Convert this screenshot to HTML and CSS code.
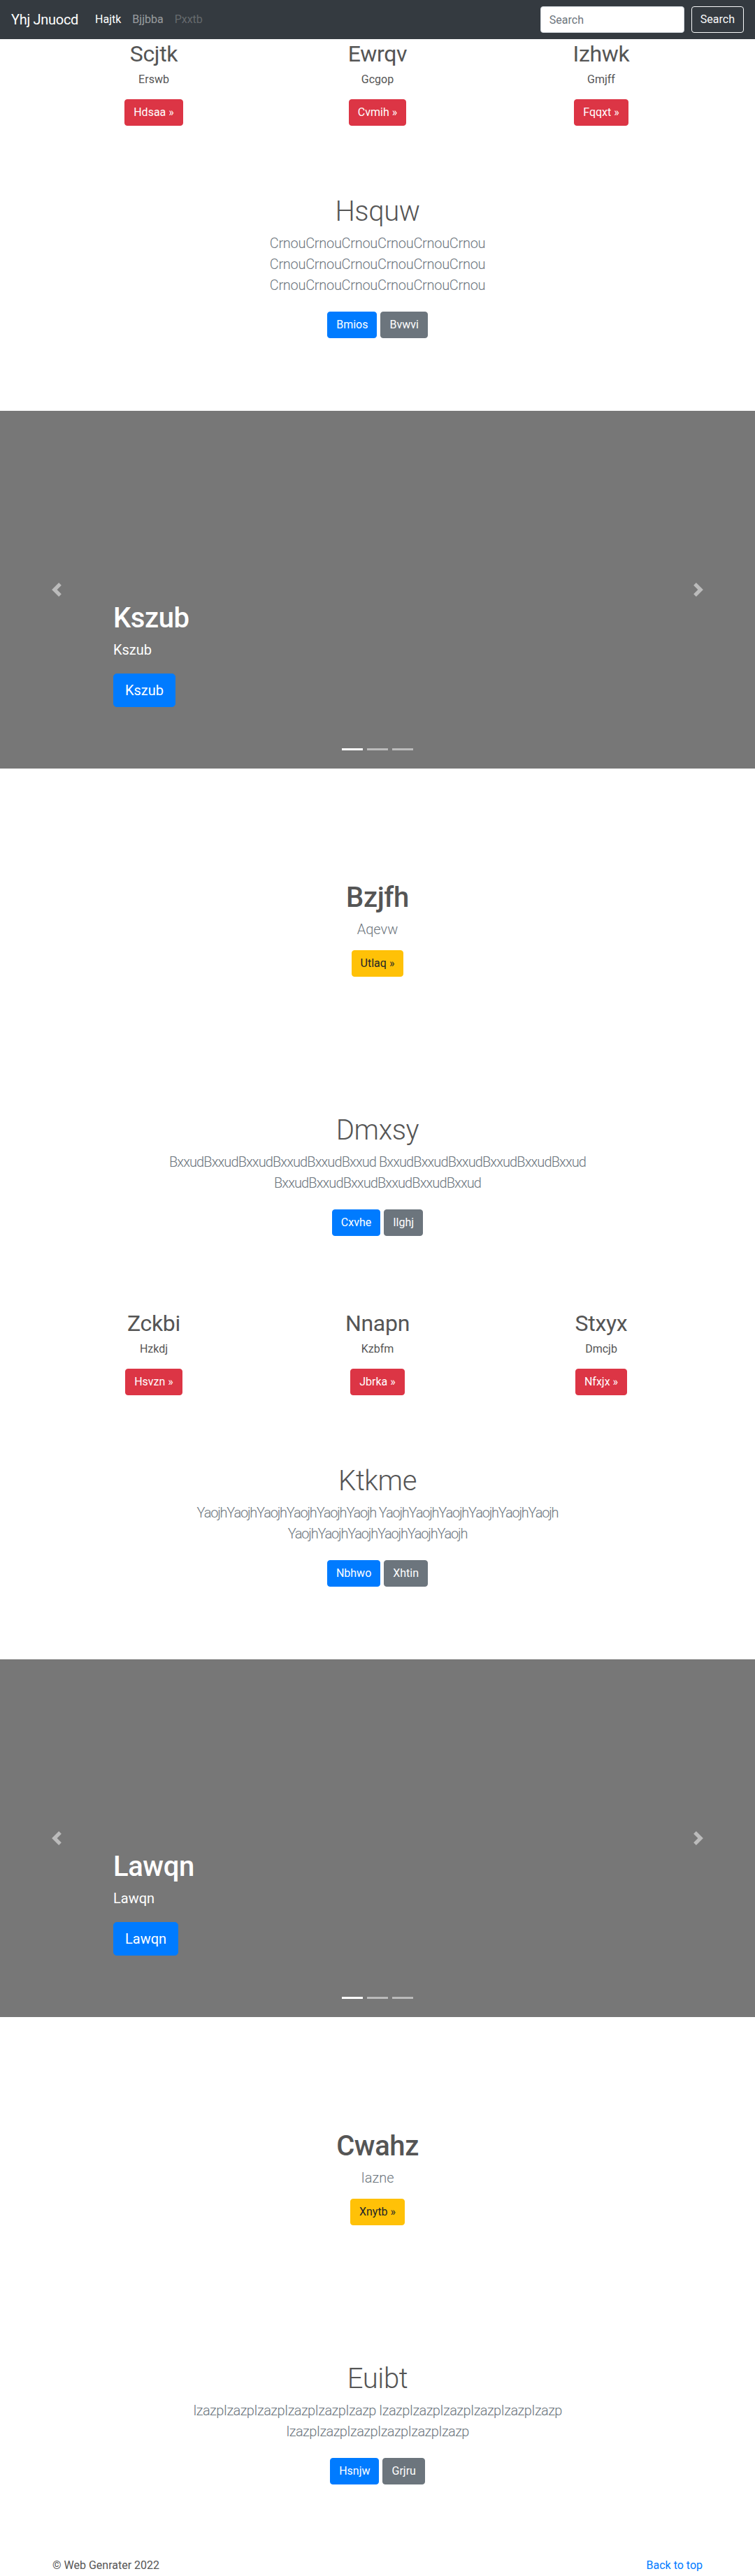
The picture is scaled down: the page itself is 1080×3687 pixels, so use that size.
FILE: index.html
```html
<!DOCTYPE html>
<html lang="en">
<head>
<meta charset="utf-8">
<title>Yhj Jnuocd</title>
<link rel="stylesheet" href="styles.css">
</head>
<body>
<header class="navbar">
  <a class="navbar-brand" href="#">Yhj Jnuocd</a>
  <nav>
    <ul class="nav-list">
      <li><a class="nav-link is-active" href="#">Hajtk</a></li>
      <li><a class="nav-link" href="#">Bjjbba</a></li>
      <li><a class="nav-link is-disabled" href="#">Pxxtb</a></li>
    </ul>
  </nav>
  <form class="search-form">
    <input class="search-input" type="text" placeholder="Search" aria-label="Search">
    <button class="btn btn-outline-light" type="button">Search</button>
  </form>
</header>

<main>
  <section class="feature-row">
    <div class="feature">
      <h2 class="feature-title">Scjtk</h2>
      <p class="feature-text">Erswb</p>
      <a class="btn btn-danger" href="#">Hdsaa &raquo;</a>
    </div>
    <div class="feature">
      <h2 class="feature-title">Ewrqv</h2>
      <p class="feature-text">Gcgop</p>
      <a class="btn btn-danger" href="#">Cvmih &raquo;</a>
    </div>
    <div class="feature">
      <h2 class="feature-title">Izhwk</h2>
      <p class="feature-text">Gmjff</p>
      <a class="btn btn-danger" href="#">Fqqxt &raquo;</a>
    </div>
  </section>

  <section class="jumbotron">
    <div class="jumbo-inner">
      <h1 class="jumbo-title">Hsquw</h1>
      <p class="lead lead-crnou">CrnouCrnouCrnouCrnouCrnouCrnou CrnouCrnouCrnouCrnouCrnouCrnou CrnouCrnouCrnouCrnouCrnouCrnou</p>
      <div class="actions">
        <a class="btn btn-primary" href="#">Bmios</a>
        <a class="btn btn-secondary" href="#">Bvwvi</a>
      </div>
    </div>
  </section>

  <section class="carousel">
    <div class="caption">
      <h1 class="caption-title">Kszub</h1>
      <p class="caption-text">Kszub</p>
      <a class="btn btn-primary btn-lg" href="#">Kszub</a>
    </div>
    <a class="control control-prev" href="#" aria-label="Previous">
      <svg class="control-icon" viewBox="0 0 8 8" width="20" height="20"><path d="M5.25 0l-4 4 4 4 1.5-1.5L4.25 4l2.5-2.5L5.25 0z"/></svg>
    </a>
    <a class="control control-next" href="#" aria-label="Next">
      <svg class="control-icon" viewBox="0 0 8 8" width="20" height="20"><path d="M2.75 0l-1.5 1.5L3.75 4l-2.5 2.5L2.75 8l4-4-4-4z"/></svg>
    </a>
    <ol class="indicators">
      <li class="is-active"></li>
      <li></li>
      <li></li>
    </ol>
  </section>

  <section class="hero">
    <h1 class="hero-title">Bzjfh</h1>
    <p class="lead">Aqevw</p>
    <a class="btn btn-warning" href="#">Utlaq &raquo;</a>
  </section>

  <section class="jumbotron">
    <div class="jumbo-inner">
      <h1 class="jumbo-title">Dmxsy</h1>
      <p class="lead lead-bxxud">BxxudBxxudBxxudBxxudBxxudBxxud BxxudBxxudBxxudBxxudBxxudBxxud BxxudBxxudBxxudBxxudBxxudBxxud</p>
      <div class="actions">
        <a class="btn btn-primary" href="#">Cxvhe</a>
        <a class="btn btn-secondary" href="#">Ilghj</a>
      </div>
    </div>
  </section>

  <section class="feature-row">
    <div class="feature">
      <h2 class="feature-title">Zckbi</h2>
      <p class="feature-text">Hzkdj</p>
      <a class="btn btn-danger" href="#">Hsvzn &raquo;</a>
    </div>
    <div class="feature">
      <h2 class="feature-title">Nnapn</h2>
      <p class="feature-text">Kzbfm</p>
      <a class="btn btn-danger" href="#">Jbrka &raquo;</a>
    </div>
    <div class="feature">
      <h2 class="feature-title">Stxyx</h2>
      <p class="feature-text">Dmcjb</p>
      <a class="btn btn-danger" href="#">Nfxjx &raquo;</a>
    </div>
  </section>

  <section class="jumbotron">
    <div class="jumbo-inner">
      <h1 class="jumbo-title">Ktkme</h1>
      <p class="lead lead-yaojh">YaojhYaojhYaojhYaojhYaojhYaojh YaojhYaojhYaojhYaojhYaojhYaojh YaojhYaojhYaojhYaojhYaojhYaojh</p>
      <div class="actions">
        <a class="btn btn-primary" href="#">Nbhwo</a>
        <a class="btn btn-secondary" href="#">Xhtin</a>
      </div>
    </div>
  </section>

  <section class="carousel">
    <div class="caption">
      <h1 class="caption-title">Lawqn</h1>
      <p class="caption-text">Lawqn</p>
      <a class="btn btn-primary btn-lg" href="#">Lawqn</a>
    </div>
    <a class="control control-prev" href="#" aria-label="Previous">
      <svg class="control-icon" viewBox="0 0 8 8" width="20" height="20"><path d="M5.25 0l-4 4 4 4 1.5-1.5L4.25 4l2.5-2.5L5.25 0z"/></svg>
    </a>
    <a class="control control-next" href="#" aria-label="Next">
      <svg class="control-icon" viewBox="0 0 8 8" width="20" height="20"><path d="M2.75 0l-1.5 1.5L3.75 4l-2.5 2.5L2.75 8l4-4-4-4z"/></svg>
    </a>
    <ol class="indicators">
      <li class="is-active"></li>
      <li></li>
      <li></li>
    </ol>
  </section>

  <section class="hero">
    <h1 class="hero-title">Cwahz</h1>
    <p class="lead">Iazne</p>
    <a class="btn btn-warning" href="#">Xnytb &raquo;</a>
  </section>

  <section class="jumbotron">
    <div class="jumbo-inner">
      <h1 class="jumbo-title">Euibt</h1>
      <p class="lead lead-izazp">IzazpIzazpIzazpIzazpIzazpIzazp IzazpIzazpIzazpIzazpIzazpIzazp IzazpIzazpIzazpIzazpIzazpIzazp</p>
      <div class="actions">
        <a class="btn btn-primary" href="#">Hsnjw</a>
        <a class="btn btn-secondary" href="#">Grjru</a>
      </div>
    </div>
  </section>
</main>

<footer class="site-footer">
  <p class="footer-copy">&copy; Web Genrater 2022</p>
  <p class="footer-top"><a href="#">Back to top</a></p>
</footer>
</body>
</html>
```

FILE: styles.css
```css
*, *::before, *::after { box-sizing: border-box; }

html, body { margin: 0; padding: 0; }

body {
  font-family: Roboto, "Segoe UI", "Helvetica Neue", Arial, sans-serif;
  font-size: 16px;
  line-height: 1.5;
  color: #555;
  background: #fff;
}

h1, h2, p { margin: 0; }

a { color: #007bff; text-decoration: none; }

/* ---------- navbar ---------- */
.navbar {
  height: 56px;
  padding: 8px 16px;
  display: flex;
  align-items: center;
  background: #343a40;
}

.navbar-brand {
  font-size: 20px;
  line-height: 30px;
  padding: 5px 0;
  margin-right: 16px;
  color: #fff;
  letter-spacing: -0.3px;
}

.nav-list {
  display: flex;
  list-style: none;
  margin: 0;
  padding: 0;
}

.nav-link {
  display: block;
  padding: 8px;
  color: rgba(255, 255, 255, 0.5);
}

.nav-link.is-active { color: #fff; }
.nav-link.is-disabled { color: rgba(255, 255, 255, 0.25); }

.search-form {
  margin-left: auto;
  display: flex;
  align-items: center;
  gap: 10px;
}

.search-input {
  width: 206px;
  height: 38px;
  padding: 6px 12px;
  font-family: inherit;
  font-size: 16px;
  line-height: 24px;
  color: #495057;
  background: #fff;
  border: 1px solid #ced4da;
  border-radius: 4px;
}

.search-input::placeholder { color: #6c757d; }

/* ---------- buttons ---------- */
.btn {
  display: inline-block;
  padding: 6px 12px;
  font-family: inherit;
  font-size: 16px;
  line-height: 24px;
  font-weight: 400;
  text-align: center;
  vertical-align: top;
  border: 1px solid transparent;
  border-radius: 4px;
  color: #fff;
  background: transparent;
  white-space: nowrap;
}

.btn-lg {
  padding: 8px 16px;
  font-size: 20px;
  line-height: 30px;
  border-radius: 5px;
}

.btn-primary { background: #007bff; border-color: #007bff; }
.btn-secondary { background: #6c757d; border-color: #6c757d; }
.btn-danger { background: #dc3545; border-color: #dc3545; }
.btn-warning { background: #ffc107; border-color: #ffc107; color: #212529; }
.btn-outline-light { color: #f8f9fa; border-color: #f8f9fa; }

/* ---------- feature rows ---------- */
.feature-row {
  display: grid;
  grid-template-columns: repeat(3, 1fr);
  max-width: 960px;
  margin: 0 auto;
}

.feature {
  display: flex;
  flex-direction: column;
  align-items: center;
  padding: 0 15px;
  text-align: center;
}

.feature-title {
  font-size: 32px;
  line-height: 38px;
  font-weight: 400;
  padding-top: 2px;
  margin-bottom: 6px;
  letter-spacing: -0.3px;
}

.feature-text {
  margin: 0 12px 16px;
}

/* ---------- jumbotron ---------- */
.jumbotron {
  padding: 96px 0;
  text-align: center;
}

.jumbo-inner {
  max-width: 640px;
  margin: 0 auto;
  padding: 0 15px;
}

.jumbo-title {
  font-size: 40px;
  line-height: 48px;
  font-weight: 300;
  padding-top: 3px;
  margin-bottom: 5px;
  letter-spacing: -0.4px;
}

.lead {
  font-size: 20px;
  line-height: 30px;
  font-weight: 300;
  color: #6c757d;
  padding-top: 1px;
  margin-bottom: 15px;
}

.lead-crnou { letter-spacing: -0.3px; }
.lead-bxxud { letter-spacing: -0.9px; }
.lead-yaojh { letter-spacing: -1.2px; }
.lead-izazp { letter-spacing: -0.6px; }

.actions {
  display: flex;
  justify-content: center;
  gap: 5px;
  padding: 8px 0;
}

/* ---------- carousel ---------- */
.carousel {
  position: relative;
  height: 512px;
  background: #777;
  overflow: hidden;
}

.caption {
  position: absolute;
  left: 15%;
  right: 15%;
  bottom: 68px;
  padding: 20px 0;
  color: #fff;
  z-index: 2;
}

.caption-title {
  font-size: 40px;
  line-height: 48px;
  font-weight: 500;
  padding-top: 3px;
  margin-bottom: 5px;
  letter-spacing: -0.4px;
}

.caption-text {
  font-size: 20px;
  line-height: 30px;
  padding-top: 1px;
  margin-bottom: 19px;
}

.control {
  position: absolute;
  top: 0;
  bottom: 0;
  width: 15%;
  display: flex;
  align-items: center;
  justify-content: center;
  opacity: 0.5;
  z-index: 1;
}

.control-prev { left: 0; }
.control-next { right: 0; }

.control-icon { fill: #fff; display: block; }

.indicators {
  position: absolute;
  left: 0;
  right: 0;
  bottom: 26px;
  margin: 0;
  padding: 0;
  list-style: none;
  display: flex;
  justify-content: center;
  gap: 6px;
  z-index: 3;
}

.indicators li {
  width: 30px;
  height: 3px;
  background: #fff;
  opacity: 0.5;
}

.indicators li.is-active { opacity: 1; }

/* ---------- hero ---------- */
.hero {
  display: flex;
  flex-direction: column;
  align-items: center;
  padding: 158px 15px 97px;
  text-align: center;
}

.hero-title {
  font-size: 40px;
  line-height: 48px;
  font-weight: 500;
  padding-top: 3px;
  margin-bottom: 5px;
  letter-spacing: -0.4px;
}

/* ---------- footer ---------- */
.site-footer {
  max-width: 960px;
  margin: 0 auto;
  padding: 0 15px;
  display: flex;
  justify-content: space-between;
}

.site-footer p { margin-bottom: 16px; }
```
